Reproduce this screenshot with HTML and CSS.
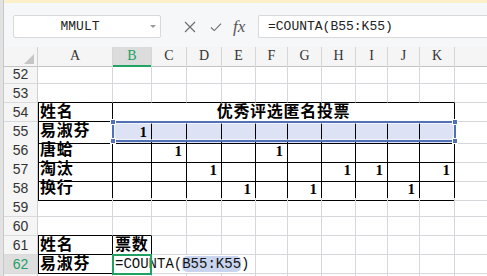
FILE: index.html
```html
<!DOCTYPE html>
<html lang="zh-CN">
<head>
<meta charset="utf-8">
<title>优秀评选匿名投票</title>
<link rel="stylesheet" href="styles.css">
</head>
<body>
<div class="win">
  <div class="edge"></div>
  <div class="main">
    <div class="notice"></div>
    <div class="bar">
      <div class="namebox"><span class="name">MMULT</span><span class="caret"></span></div>
      <div class="tools">
        <svg class="ico" viewBox="0 0 12 12"><path d="M1 1L11 11M11 1L1 11"/></svg>
        <svg class="ico ok" viewBox="0 0 12 12"><path d="M1 6.5L4.3 9.6L11 2.6"/></svg>
        <span class="fx">fx</span>
      </div>
      <div class="formula">=COUNTA(B55:K55)</div>
    </div>
    <div class="sheet">
      <div class="row head">
        <div class="corner"></div>
        <div class="ch">A</div><div class="ch on">B</div><div class="ch">C</div><div class="ch">D</div><div class="ch">E</div><div class="ch">F</div><div class="ch">G</div><div class="ch">H</div><div class="ch">I</div><div class="ch">J</div><div class="ch">K</div><div class="ch"></div>
      </div>
      <div class="row">
        <div class="rh">52</div>
        <div class="c"></div><div class="c"></div><div class="c"></div><div class="c"></div><div class="c"></div><div class="c"></div><div class="c"></div><div class="c"></div><div class="c"></div><div class="c"></div><div class="c"></div><div class="c"></div>
      </div>
      <div class="row">
        <div class="rh">53</div>
        <div class="c tb"></div><div class="c tb"></div><div class="c tb"></div><div class="c tb"></div><div class="c tb"></div><div class="c tb"></div><div class="c tb"></div><div class="c tb"></div><div class="c tb"></div><div class="c tb"></div><div class="c tb"></div><div class="c"></div>
      </div>
      <div class="row">
        <div class="rh">54</div>
        <div class="c t tl z">姓名</div>
        <div class="c t z title">优秀评选匿名投票</div>
        <div class="c"></div>
      </div>
      <div class="row">
        <div class="rh">55</div>
        <div class="c t tl z">易淑芬</div>
        <div class="c t s n cur">1<span class="frame"><i class="hd lt"></i><i class="hd lb"></i><i class="hd rt"></i><i class="hd rb"></i></span></div>
        <div class="c t s"></div><div class="c t s"></div><div class="c t s"></div><div class="c t s"></div><div class="c t s"></div><div class="c t s"></div><div class="c t s"></div><div class="c t s"></div><div class="c t s"></div>
        <div class="c"></div>
      </div>
      <div class="row">
        <div class="rh">56</div>
        <div class="c t tl z">唐蛤</div>
        <div class="c t"></div><div class="c t n">1</div><div class="c t"></div><div class="c t"></div><div class="c t n">1</div><div class="c t"></div><div class="c t"></div><div class="c t"></div><div class="c t"></div><div class="c t"></div>
        <div class="c"></div>
      </div>
      <div class="row">
        <div class="rh">57</div>
        <div class="c t tl z">淘汰</div>
        <div class="c t"></div><div class="c t"></div><div class="c t n">1</div><div class="c t"></div><div class="c t"></div><div class="c t"></div><div class="c t n">1</div><div class="c t n">1</div><div class="c t"></div><div class="c t n">1</div>
        <div class="c"></div>
      </div>
      <div class="row">
        <div class="rh">58</div>
        <div class="c t tl z">换行</div>
        <div class="c t"></div><div class="c t"></div><div class="c t"></div><div class="c t n">1</div><div class="c t"></div><div class="c t n">1</div><div class="c t"></div><div class="c t"></div><div class="c t n">1</div><div class="c t"></div>
        <div class="c"></div>
      </div>
      <div class="row">
        <div class="rh">59</div>
        <div class="c"></div><div class="c"></div><div class="c"></div><div class="c"></div><div class="c"></div><div class="c"></div><div class="c"></div><div class="c"></div><div class="c"></div><div class="c"></div><div class="c"></div><div class="c"></div>
      </div>
      <div class="row">
        <div class="rh">60</div>
        <div class="c tb"></div><div class="c tb"></div><div class="c"></div><div class="c"></div><div class="c"></div><div class="c"></div><div class="c"></div><div class="c"></div><div class="c"></div><div class="c"></div><div class="c"></div><div class="c"></div>
      </div>
      <div class="row">
        <div class="rh">61</div>
        <div class="c t tl z">姓名</div><div class="c t z">票数</div>
        <div class="c"></div><div class="c"></div><div class="c"></div><div class="c"></div><div class="c"></div><div class="c"></div><div class="c"></div><div class="c"></div><div class="c"></div><div class="c"></div>
      </div>
      <div class="row">
        <div class="rh act">62</div>
        <div class="c t tl z">易淑芬</div>
        <div class="c t edit"><span class="txt">=COUNTA(<span class="ref">B55:K55</span>)</span></div>
        <div class="c"></div><div class="c"></div><div class="c"></div><div class="c"></div><div class="c"></div><div class="c"></div><div class="c"></div><div class="c"></div><div class="c"></div><div class="c"></div>
      </div>
      <div class="row">
        <div class="rh"></div>
        <div class="c"></div><div class="c"></div><div class="c"></div><div class="c"></div><div class="c"></div><div class="c"></div><div class="c"></div><div class="c"></div><div class="c"></div><div class="c"></div><div class="c"></div><div class="c"></div>
      </div>
    </div>
  </div>
</div>
</body>
</html>
```
FILE: styles.css
```css
* { box-sizing: border-box; }
html, body { margin: 0; }
body {
  width: 487px;
  height: 276px;
  overflow: hidden;
  background: #fff;
  font-family: "Liberation Sans", Arial, sans-serif;
  color: #222;
}
.win { display: flex; height: 276px; }
.edge {
  width: 4px;
  flex: none;
  background: #e2e2e2;
  border-right: 1px solid #c8c8c8;
}
.main { flex: 1; min-width: 0; overflow: hidden; }
.notice { height: 3px; background: #fcf0c9; }
.bar {
  height: 44px;
  background: #f6f7f9;
  display: flex;
  align-items: flex-start;
  padding: 12px 0 0 9px;
}
.namebox {
  width: 148px;
  height: 23px;
  flex: none;
  background: #fff;
  border: 1px solid #d9d9d9;
  border-radius: 2px;
  display: flex;
  align-items: center;
}
.name {
  flex: 1;
  text-align: center;
  font: 13px/21px "Liberation Mono", monospace;
  color: #222;
}
.caret {
  width: 14px;
  height: 21px;
  display: flex;
  align-items: center;
  justify-content: center;
}
.caret::before {
  content: "";
  border-left: 3px solid transparent;
  border-right: 3px solid transparent;
  border-top: 3px solid #9a9a9a;
}
.tools {
  display: flex;
  align-items: center;
  height: 23px;
  margin-left: 23px;
  flex: none;
}
.ico {
  width: 12px;
  height: 12px;
  fill: none;
  stroke: #6a6a6a;
  stroke-width: 1.1;
}
.ok { margin-left: 14px; }
.fx {
  display: inline-block;
  width: 16px;
  margin-left: 11px;
  font: italic 17px/23px "Liberation Serif", serif;
  color: #555;
}
.formula {
  flex: 1;
  margin-left: 9px;
  height: 23px;
  background: #fff;
  border: 1px solid #d9d9d9;
  border-right: 0;
  border-radius: 2px 0 0 2px;
  padding-left: 9px;
  font: 13px/21px "Liberation Mono", monospace;
  color: #222;
  white-space: nowrap;
}

.row {
  display: grid;
  grid-template-columns: 34px 75px 39px 35px 35px 34px 32px 34px 34px 32px 32px 35px 40px;
  height: 19px;
}
.row.head { height: 18px; }
.corner {
  position: relative;
  background: #f5f5f5;
  border-right: 1px solid #d0d0d0;
  border-bottom: 1px solid #c4c4c4;
}
.corner::after {
  content: "";
  position: absolute;
  right: 3px;
  bottom: 2px;
  border-left: 10px solid transparent;
  border-bottom: 10px solid #c6c6c6;
}
.ch {
  background: #f5f5f5;
  border-right: 1px solid #d6d6d6;
  border-bottom: 1px solid #c4c4c4;
  text-align: center;
  font: 14px/18px "Liberation Serif", serif;
  color: #333;
}
.ch.on {
  background: #dcdcdc;
  color: #21a162;
  border-bottom: 2px solid #21a366;
}
.rh {
  background: #f5f5f5;
  border-right: 1px solid #d0d0d0;
  border-bottom: 1px solid #dadada;
  text-align: center;
  font: 14px/18px "Liberation Sans", sans-serif;
  color: #333;
}
.rh.act { background: #dedede; color: #23a064; }

.c {
  border-right: 1px solid #d6d7db;
  border-bottom: 1px solid #d6d7db;
  min-width: 0;
  white-space: nowrap;
}
.c.t { border-right-color: #000; border-bottom-color: #000; }
.c.tb { border-bottom-color: #000; }
.c.tl { box-shadow: inset 1px 0 0 #000; }
.c.s { background: #dde3f4; }
.z {
  font: 700 16px/18px "Liberation Sans", "Noto Sans CJK SC", sans-serif;
  letter-spacing: 0.7px;
  color: #000;
  padding-left: 2px;
}
.title {
  grid-column: span 10;
  text-align: center;
  padding-left: 0;
}
.n {
  text-align: right;
  padding-right: 4px;
  font: 700 15px/21px "Liberation Serif", serif;
  color: #000;
}
.cur { position: relative; }
.frame {
  position: absolute;
  left: -1px;
  top: -1px;
  width: 344px;
  height: 21px;
  border: 2px solid #5271b5;
  box-shadow: inset 0 0 0 1px rgba(255, 255, 255, 0.6);
  z-index: 3;
}
.hd {
  position: absolute;
  width: 6px;
  height: 6px;
  background: #5271b5;
  border: 1px solid #fff;
}
.hd.lt { left: -4px; top: -4px; }
.hd.lb { left: -4px; bottom: -4px; }
.hd.rt { right: -4px; top: -4px; }
.hd.rb { right: -4px; bottom: -4px; }

.edit { position: relative; overflow: visible; }
.edit .txt {
  position: absolute;
  left: 1px;
  top: 0;
  z-index: 1;
  background: #fff;
  padding: 0 3px 0 1px;
  font: 14px/18px "Liberation Mono", monospace;
  color: #111;
  white-space: nowrap;
}
.ref { background: #c9d5ee; border-radius: 5px; }
.edit::after {
  content: "";
  position: absolute;
  left: -1px;
  top: -1px;
  right: -1px;
  bottom: -2px;
  border: 2px solid #21a064;
  z-index: 2;
}
```
